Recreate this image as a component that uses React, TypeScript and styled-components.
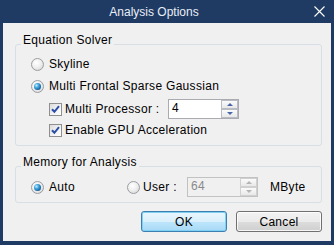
import React from "react";
import styled, { createGlobalStyle } from "styled-components";

const GlobalStyle = createGlobalStyle`
  html, body {
    margin: 0;
    padding: 0;
    background: #1f3a63;
  }
  body {
    font-family: "Liberation Sans", Arial, sans-serif;
  }
`;

const Window = styled.div`
  width: 334px;
  height: 245px;
  background: #1f3a63;
  display: flex;
  flex-direction: column;
  overflow: hidden;
`;

const TitleBar = styled.div`
  height: 23px;
  flex-shrink: 0;
  display: flex;
  align-items: center;
  padding-right: 3px;
`;

const Title = styled.div`
  flex: 1;
  text-align: center;
  color: #e8eef7;
  font-size: 12px;
  padding-top: 1px;
`;

const Close = styled.div`
  width: 23px;
  height: 23px;
  display: flex;
  align-items: center;
  justify-content: center;
`;

const Body = styled.div`
  flex: 1;
  margin: 0 3px 4px 3px;
  background: #f0f0f0;
  padding: 21px 9px 0 12px;
  display: flex;
  flex-direction: column;
  font-size: 12px;
  letter-spacing: 0.3px;
  color: #000;
`;

const Group = styled.div<{ $top?: number; $bottom: number }>`
  margin-top: ${(p) => p.$top ?? 0}px;
  border: 1px solid #d5dfe5;
  border-radius: 3px;
  display: flex;
  flex-direction: column;
  padding-bottom: ${(p) => p.$bottom}px;
`;

const Legend = styled.div<{ $after: number }>`
  align-self: flex-start;
  margin: -12px 0 ${(p) => p.$after}px 5px;
  padding: 0 2px;
  line-height: 14px;
  background: #f0f0f0;
`;

const Row = styled.div<{ $h: number; $indent: number }>`
  height: ${(p) => p.$h}px;
  padding-left: ${(p) => p.$indent}px;
  display: flex;
  align-items: center;
`;

const Option = styled.div<{ $width?: number }>`
  display: flex;
  align-items: center;
  width: ${(p) => (p.$width ? `${p.$width}px` : "auto")};
  flex-shrink: 0;
`;

const Radio = styled.span<{ $checked?: boolean }>`
  width: 13px;
  height: 13px;
  box-sizing: border-box;
  border-radius: 50%;
  border: 1px solid #9a9da2;
  background: radial-gradient(circle at 40% 35%, #ffffff 0%, #f0f0f0 45%, #cfcfcf 100%);
  display: flex;
  align-items: center;
  justify-content: center;
  flex-shrink: 0;

  &::after {
    content: "";
    display: ${(p) => (p.$checked ? "block" : "none")};
    width: 7px;
    height: 7px;
    border-radius: 50%;
    background: radial-gradient(circle at 35% 35%, #c4ecfc 0%, #41a6de 35%, #0e5a9b 75%, #0a3d70 100%);
  }
`;

const Check = styled.span`
  width: 13px;
  height: 13px;
  box-sizing: border-box;
  border: 1px solid #8f8f8f;
  background: linear-gradient(135deg, #dcdcdc 0%, #f4f4f4 60%, #ffffff 100%);
  padding: 1px;
  display: flex;
  flex-shrink: 0;

  svg {
    display: block;
  }
`;

const Label = styled.span<{ $gap: number; $width?: number }>`
  margin-left: ${(p) => p.$gap}px;
  width: ${(p) => (p.$width ? `${p.$width}px` : "auto")};
  white-space: nowrap;
  flex-shrink: 0;
`;

const Spin = styled.div<{ $disabled?: boolean }>`
  width: 71px;
  height: 20px;
  box-sizing: border-box;
  border: 1px solid ${(p) => (p.$disabled ? "#c2c2c2" : "#a9abb0")};
  background: ${(p) => (p.$disabled ? "#f0f0f0" : "#fff")};
  display: flex;
  flex-shrink: 0;
`;

const SpinValue = styled.div<{ $disabled?: boolean }>`
  flex: 1;
  padding-left: 3px;
  line-height: 17px;
  color: ${(p) => (p.$disabled ? "#8a8a8a" : "#000")};
`;

const SpinButtons = styled.div`
  width: 17px;
  display: flex;
  flex-direction: column;
`;

const SpinButton = styled.div<{ $disabled?: boolean }>`
  flex: 1;
  box-sizing: border-box;
  border: 1px solid ${(p) => (p.$disabled ? "#d0d0d0" : "#b9bcc2")};
  background: linear-gradient(#fbfbfb, #e8e8e8);
  display: flex;
  align-items: center;
  justify-content: center;
`;

const Arrow = styled.span<{ $down?: boolean; $disabled?: boolean }>`
  width: 0;
  height: 0;
  border-left: 3px solid transparent;
  border-right: 3px solid transparent;
  ${(p) => (p.$down ? "border-top" : "border-bottom")}: 3px solid
    ${(p) => (p.$disabled ? "#b4b4b4" : "#4a64a8")};
`;

const Unit = styled.span`
  margin-left: 12px;
`;

const Buttons = styled.div`
  margin-top: 8px;
  display: flex;
  justify-content: flex-end;
  gap: 9px;
`;

const Button = styled.button<{ $primary?: boolean }>`
  width: 86px;
  height: 21px;
  box-sizing: border-box;
  padding: 0;
  border-radius: 3px;
  border: 1px solid ${(p) => (p.$primary ? "#3c7fb1" : "#707070")};
  background: ${(p) =>
    p.$primary
      ? "linear-gradient(#eaf6fd 0%, #d9f0fc 50%, #bee6fd 51%, #a7d9f5 100%)"
      : "linear-gradient(#f2f2f2 0%, #ebebeb 50%, #dddddd 51%, #cfcfcf 100%)"};
  box-shadow: inset 0 0 0 1px ${(p) => (p.$primary ? "#7fd0f5" : "rgba(255,255,255,0.8)")};
  font: inherit;
  letter-spacing: 0.3px;
  color: #000;
`;

const CheckMark = () => (
  <svg width="9" height="9" viewBox="0 0 9 9">
    <path d="M1 4.2 L3.4 6.8 L8 1.2" fill="none" stroke="#2b4fa8" strokeWidth="2" />
  </svg>
);

const SpinBox: React.FC<{ value: string; disabled?: boolean }> = ({ value, disabled }) => (
  <Spin $disabled={disabled}>
    <SpinValue $disabled={disabled}>{value}</SpinValue>
    <SpinButtons>
      <SpinButton $disabled={disabled}>
        <Arrow $disabled={disabled} />
      </SpinButton>
      <SpinButton $disabled={disabled}>
        <Arrow $down $disabled={disabled} />
      </SpinButton>
    </SpinButtons>
  </Spin>
);

const App: React.FC = () => {
  return (
    <Window>
      <GlobalStyle />
      <TitleBar>
        <Title>Analysis Options</Title>
        <Close>
          <svg width="11" height="11" viewBox="0 0 11 11">
            <path d="M0.5 0.5 L10.5 10.5 M10.5 0.5 L0.5 10.5" stroke="#ffffff" strokeWidth="1.1" />
          </svg>
        </Close>
      </TitleBar>
      <Body>
        <Group $bottom={6}>
          <Legend $after={6}>Equation Solver</Legend>
          <Row $h={22} $indent={15}>
            <Radio />
            <Label $gap={5}>Skyline</Label>
          </Row>
          <Row $h={22} $indent={15}>
            <Radio $checked />
            <Label $gap={5}>Multi Frontal Sparse Gaussian</Label>
          </Row>
          <Row $h={24} $indent={33}>
            <Check>
              <CheckMark />
            </Check>
            <Label $gap={3} $width={103}>
              Multi Processor :
            </Label>
            <SpinBox value="4" />
          </Row>
          <Row $h={18} $indent={33}>
            <Check>
              <CheckMark />
            </Check>
            <Label $gap={3}>Enable GPU Acceleration</Label>
          </Row>
        </Group>
        <Group $top={20} $bottom={5}>
          <Legend $after={8}>Memory for Analysis</Legend>
          <Row $h={20} $indent={15}>
            <Option $width={96}>
              <Radio $checked />
              <Label $gap={5}>Auto</Label>
            </Option>
            <Option>
              <Radio />
              <Label $gap={3} $width={44}>
                User :
              </Label>
            </Option>
            <SpinBox value="64" disabled />
            <Unit>MByte</Unit>
          </Row>
        </Group>
        <Buttons>
          <Button $primary>OK</Button>
          <Button>Cancel</Button>
        </Buttons>
      </Body>
    </Window>
  );
};

export default App;
